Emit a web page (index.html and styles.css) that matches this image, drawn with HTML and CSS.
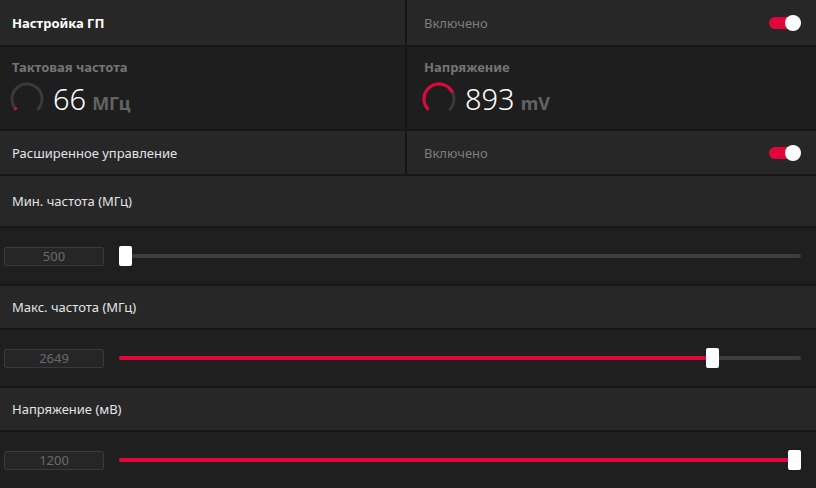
FILE: index.html
```html
<!DOCTYPE html>
<html lang="ru">
<head>
    <meta charset="UTF-8">
    <meta name="viewport" content="width=device-width, initial-scale=1.0">
    <title>Настройка ГП</title>
    <link rel="stylesheet" href="styles.css">
</head>
<body>

<div class="panel">
    <!-- заголовок -->
    <div class="row split head">
        <div class="cell"><span class="title">Настройка ГП</span></div>
        <div class="cell state">
            <span>Включено</span>
            <span class="toggle on"></span>
        </div>
    </div>

    <!-- показатели -->
    <div class="row split gauges">
        <div class="cell gauge-cell">
            <div class="gauge-label">Тактовая частота</div>
            <div class="gauge-value">
                <svg class="gauge" width="36" height="36" viewBox="0 0 36 36">
                    <circle class="arc-bg" cx="18" cy="18" r="15"></circle>
                    <circle class="arc-fg" cx="18" cy="18" r="15" style="stroke-dasharray: 2.5 100"></circle>
                </svg>
                <span class="num">66</span>
                <span class="unit">МГц</span>
            </div>
        </div>
        <div class="cell gauge-cell">
            <div class="gauge-label">Напряжение</div>
            <div class="gauge-value">
                <svg class="gauge" width="36" height="36" viewBox="0 0 36 36">
                    <circle class="arc-bg" cx="18" cy="18" r="15"></circle>
                    <circle class="arc-fg" cx="18" cy="18" r="15" style="stroke-dasharray: 52 100"></circle>
                </svg>
                <span class="num">893</span>
                <span class="unit">mV</span>
            </div>
        </div>
    </div>

    <div class="row split sub">
        <div class="cell"><span class="label">Расширенное управление</span></div>
        <div class="cell state">
            <span>Включено</span>
            <span class="toggle on"></span>
        </div>
    </div>

    <!-- ползунки -->
    <div class="row label-row first"><span class="label">Мин. частота (МГц)</span></div>
    <div class="row slider-row">
        <div class="num-box">500</div>
        <div class="slider">
            <div class="fill" style="width: 0px"></div>
            <div class="thumb" style="left: 0px"></div>
        </div>
    </div>

    <div class="row label-row"><span class="label">Макс. частота (МГц)</span></div>
    <div class="row slider-row">
        <div class="num-box">2649</div>
        <div class="slider">
            <div class="fill" style="width: calc(0.877 * (100% - 13px))"></div>
            <div class="thumb" style="left: calc(0.877 * (100% - 13px))"></div>
        </div>
    </div>

    <div class="row label-row"><span class="label">Напряжение (мВ)</span></div>
    <div class="row slider-row">
        <div class="num-box">1200</div>
        <div class="slider">
            <div class="fill" style="width: 100%"></div>
            <div class="thumb" style="left: calc(100% - 13px)"></div>
        </div>
    </div>
</div>

</body>
</html>
```

FILE: styles.css
```css
/* общая страница */
body {
    margin: 0;
    background-color: #171717;
    font-family: "Noto Sans", "Open Sans", sans-serif;
    font-size: 13px;
    color: #e2e4e8;
}

/* колонка строк с тёмными разделителями */
.panel {
    display: flex;
    flex-direction: column;
    gap: 2px;
    height: 488px;
}

.row {
    background-color: #272727;
}

.split {
    display: grid;
    grid-template-columns: 405px 1fr;
    gap: 2px;
    background-color: #151515;
}

.cell {
    background-color: #272727;
    display: flex;
    align-items: center;
    padding: 0 15px 0 12px;
}

.head { height: 45px; }
.sub { height: 43px; }

.title {
    font-weight: bold;
    color: #ffffff;
}

.state {
    justify-content: space-between;
    padding-left: 17px;
    color: #7d7d7d;
}

/* переключатель */
.toggle {
    position: relative;
    width: 32px;
    height: 12px;
    border-radius: 6px;
    background-color: #e2063a;
}

.toggle::after {
    content: "";
    position: absolute;
    right: 0;
    top: -2px;
    width: 16px;
    height: 16px;
    border-radius: 50%;
    background-color: #ffffff;
}

/* блок показателей */
.gauges { height: 82px; }

.gauges .cell {
    background-color: #1e1e1e;
}

.gauge-cell {
    flex-direction: column;
    align-items: flex-start;
    justify-content: flex-start;
    padding-top: 11px;
}

.gauge-cell + .gauge-cell {
    padding-left: 17px;
}

.gauge-label {
    font-weight: bold;
    color: #757575;
    line-height: 18px;
}

.gauge-value {
    display: flex;
    align-items: baseline;
    margin-top: 5px;
    margin-left: -3px;
}

.gauge {
    align-self: center;
    margin-right: 8px;
    transform: rotate(135deg);
}

.arc-bg, .arc-fg {
    fill: none;
    stroke-width: 3;
}

.arc-bg {
    stroke: #3a3a3a;
    stroke-dasharray: 70.7 100;
}

.arc-fg {
    stroke: #e2063a;
}

.num {
    font-size: 29px;
    font-weight: 300;
    color: #ffffff;
    line-height: 36px;
}

.unit {
    font-size: 18px;
    font-weight: bold;
    color: #636363;
    margin-left: 6px;
}

/* подписи ползунков */
.label-row {
    display: flex;
    align-items: center;
    height: 42px;
    padding-left: 12px;
}

.label-row.first { height: 50px; }

.slider-row {
    display: flex;
    align-items: center;
    height: 56px;
    padding: 0 15px 0 4px;
    background-color: #1f1f1f;
}

.num-box {
    box-sizing: border-box;
    width: 100px;
    height: 19px;
    border: 1px solid #3a3a3a;
    border-radius: 2px;
    background-color: #262626;
    color: #6a6a6a;
    text-align: center;
    line-height: 17px;
    font-size: 13px;
}

.slider {
    position: relative;
    flex: 1;
    height: 4px;
    margin-left: 15px;
    border-radius: 2px;
    background-color: #3d3d3d;
}

.fill {
    height: 100%;
    border-radius: 2px;
    background-color: #e2063a;
}

.thumb {
    position: absolute;
    top: -8px;
    width: 13px;
    height: 20px;
    border-radius: 2px;
    background-color: #ffffff;
}
```
